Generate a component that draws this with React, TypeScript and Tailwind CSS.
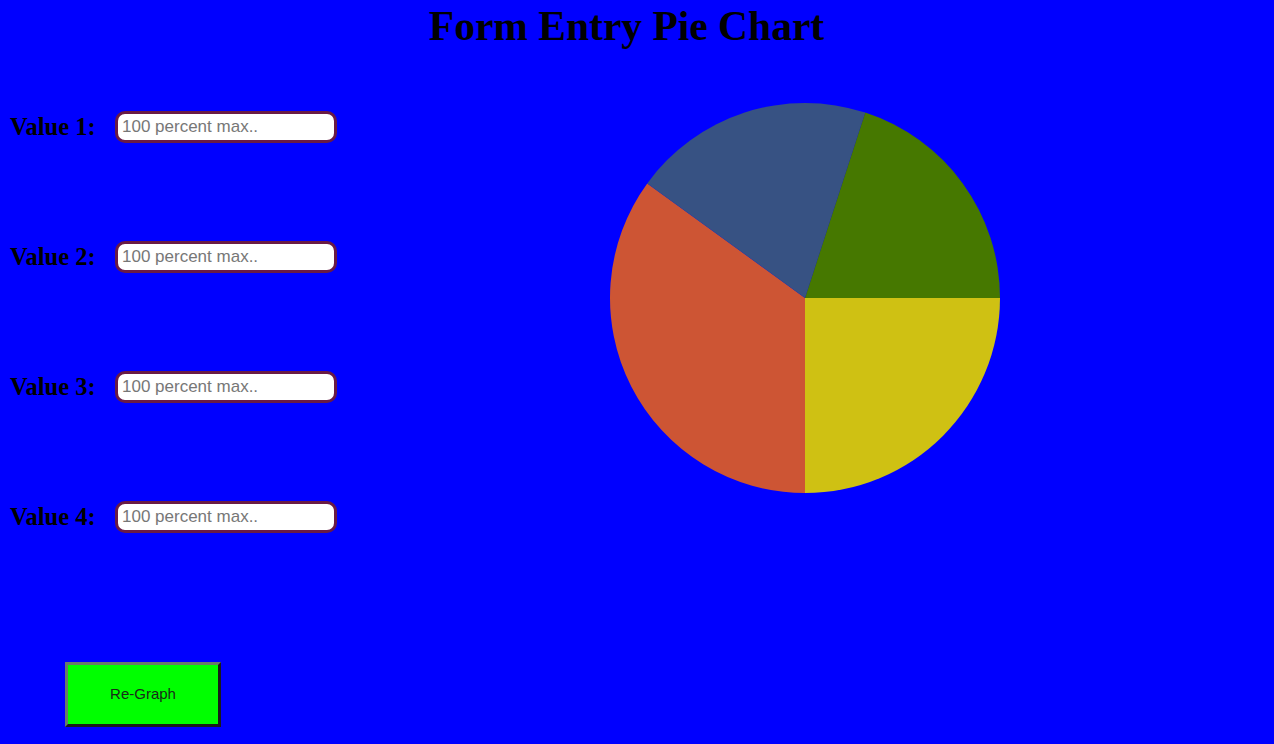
import React from 'react';

const slices = [
  { value: 25, color: '#cfc113' },
  { value: 35, color: '#cd5534' },
  { value: 20, color: '#375283' },
  { value: 20, color: '#467800' },
];

const Pie = () => {
  const r = 195;
  let start = 0;
  return (
    <svg width={392} height={392} viewBox="-196 -196 392 392">
      {slices.map((s, i) => {
        const a0 = (start / 100) * Math.PI * 2;
        start += s.value;
        const a1 = (start / 100) * Math.PI * 2;
        const large = a1 - a0 > Math.PI ? 1 : 0;
        const d = `M0 0 L${r * Math.cos(a0)} ${r * Math.sin(a0)} A${r} ${r} 0 ${large} 1 ${r * Math.cos(a1)} ${r * Math.sin(a1)} Z`;
        return <path key={i} d={d} fill={s.color} />;
      })}
    </svg>
  );
};

export default function App() {
  return (
    <div className="w-full h-[744px] bg-[#0000ff] overflow-hidden relative">
      <h1 className="text-center text-[41.5px] font-bold leading-none pt-[6px] pr-[21px] text-black font-['Liberation_Serif',serif]">
        Form Entry Pie Chart
      </h1>
      <div className="flex">
        <div className="w-[400px] pl-[10px] pt-[63px]">
          {[1, 2, 3, 4].map((n) => (
            <div key={n} className="flex items-center h-[32px] mb-[98px]">
              <label className="w-[105px] text-[24.5px] font-bold text-black font-['Liberation_Serif',serif] pt-[2px]">
                Value {n}:
              </label>
              <input
                placeholder="100 percent max.."
                className="w-[222px] h-[32px] bg-white border-[3px] border-[#6a1b45] rounded-[10px] px-[4px] text-[17px] text-black placeholder:text-[#777] font-['Liberation_Sans',sans-serif] outline-none"
              />
            </div>
          ))}
          <button className="ml-[55px] mt-[31px] w-[156px] h-[65px] bg-[#00ff00] border-[3px] border-t-[#6a7a6a] border-l-[#6a7a6a] border-r-[#1a1a1a] border-b-[#1a1a1a] text-[15px] text-[#1a2a1a] font-['Liberation_Sans',sans-serif]">
            Re-Graph
          </button>
        </div>
        <div className="ml-[209px] mt-[54px]">
          <Pie />
        </div>
      </div>
    </div>
  );
}
